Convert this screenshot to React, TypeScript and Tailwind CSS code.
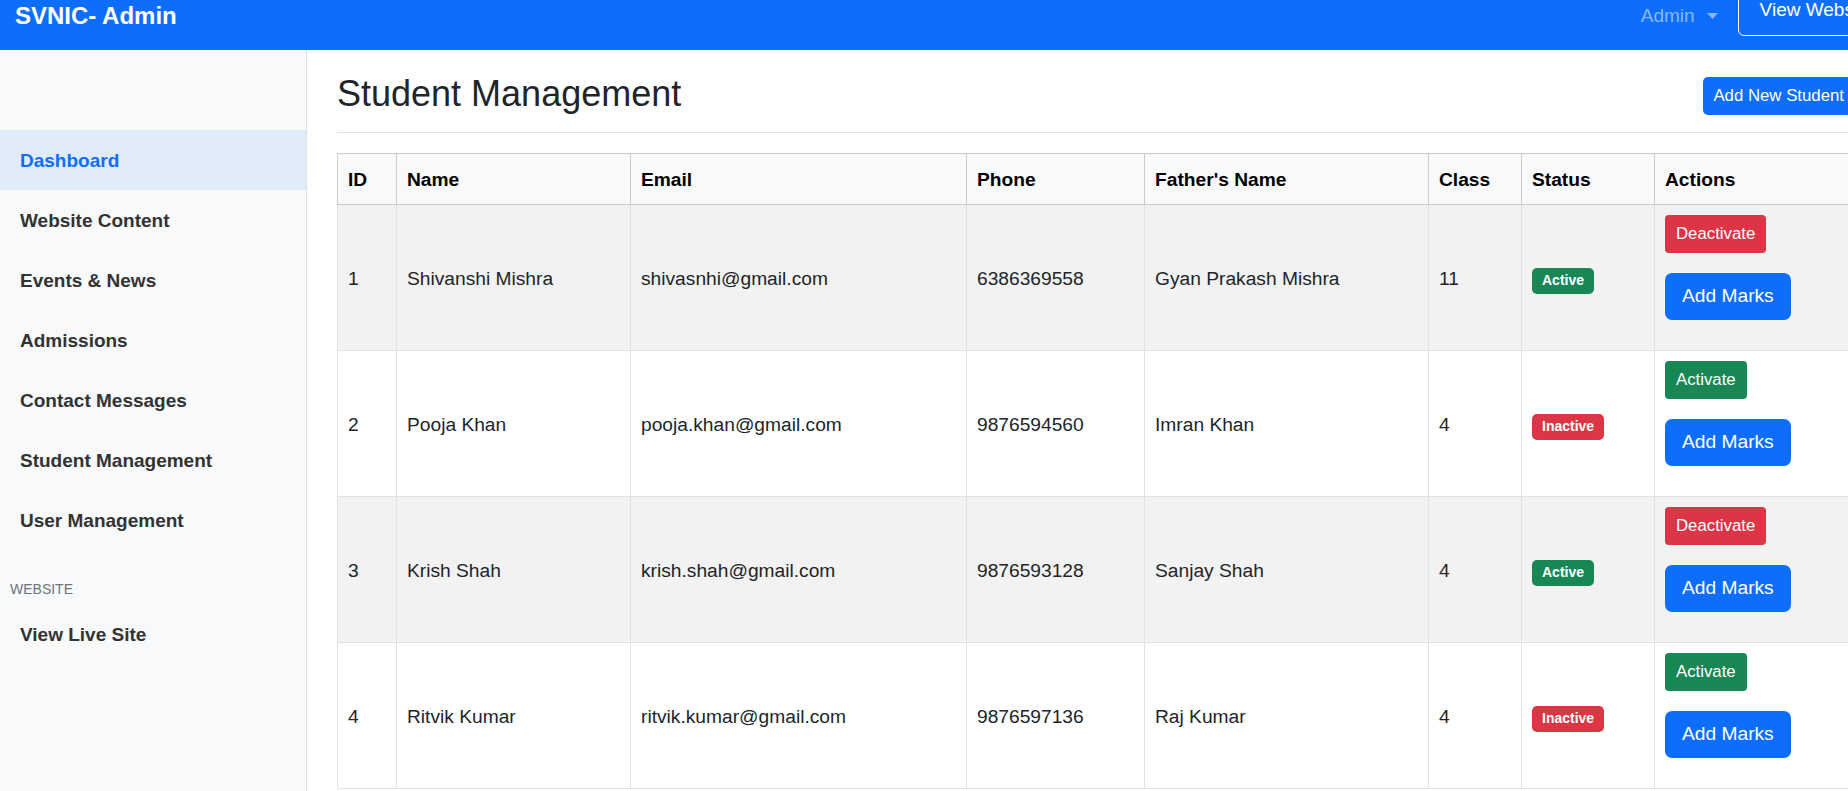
import { Fragment } from "react";

type Student = {
  id: number;
  name: string;
  email: string;
  phone: string;
  father: string;
  cls: string;
  active: boolean;
};

const students: Student[] = [
  { id: 1, name: "Shivanshi Mishra", email: "shivasnhi@gmail.com", phone: "6386369558", father: "Gyan Prakash Mishra", cls: "11", active: true },
  { id: 2, name: "Pooja Khan", email: "pooja.khan@gmail.com", phone: "9876594560", father: "Imran Khan", cls: "4", active: false },
  { id: 3, name: "Krish Shah", email: "krish.shah@gmail.com", phone: "9876593128", father: "Sanjay Shah", cls: "4", active: true },
  { id: 4, name: "Ritvik Kumar", email: "ritvik.kumar@gmail.com", phone: "9876597136", father: "Raj Kumar", cls: "4", active: false },
];

const menu = [
  "Dashboard",
  "Website Content",
  "Events & News",
  "Admissions",
  "Contact Messages",
  "Student Management",
  "User Management",
];

const headers = ["ID", "Name", "Email", "Phone", "Father's Name", "Class", "Status", "Actions"];

function Navbar() {
  return (
    <nav className="w-[1911px] h-[50px] bg-[#0d6efd] flex items-center justify-between pl-[15px] pr-[15px] pb-[18px]">
      <span className="text-white font-bold text-[24px] leading-none">SVNIC- Admin</span>
      <div className="flex items-center">
        <button className="flex items-center gap-[12px] text-[19px] text-[#8ab6fe]">
          Admin
          <svg width="11" height="6" viewBox="0 0 11 6">
            <path d="M0 0h11L5.5 6z" fill="currentColor" />
          </svg>
        </button>
        <button className="ml-[20px] self-start -mt-[19px] h-[58px] flex items-center pt-[8px] px-[21px] border border-white rounded-[6px] text-white text-[19px] whitespace-nowrap">
          View Website
        </button>
      </div>
    </nav>
  );
}

function Sidebar() {
  return (
    <aside className="w-[307px] shrink-0 h-[741px] bg-[#f8f9fa] border-r border-[#dee2e6] pt-[80px]">
      {menu.map((item, i) => (
        <a
          key={item}
          href="#"
          className={`h-[60px] flex items-center px-[20px] pt-[2px] text-[19px] font-bold ${
            i === 0 ? "bg-[#e0ebfa] text-[#0d6efd]" : "text-[#333]"
          }`}
        >
          {item}
        </a>
      ))}
      <div className="mt-[29px] h-[20px] flex items-center px-[10px] text-[14px] text-[#6c757d] uppercase">
        Website
      </div>
      <a href="#" className="mt-[6px] h-[60px] flex items-center px-[20px] text-[19px] font-bold text-[#333]">
        View Live Site
      </a>
    </aside>
  );
}

function StudentRow({ s, striped }: { s: Student; striped: boolean }) {
  const cell = "border border-[#dee2e6] px-[10px] pt-[4px] align-middle";
  return (
    <tr className={striped ? "bg-[#f2f2f2]" : "bg-white"}>
      <td className={cell}>{s.id}</td>
      <td className={cell}>{s.name}</td>
      <td className={cell}>{s.email}</td>
      <td className={cell}>{s.phone}</td>
      <td className={cell}>{s.father}</td>
      <td className={cell}>{s.cls}</td>
      <td className={cell}>
        {s.active ? (
          <span className="inline-flex items-center h-[26px] px-[10px] rounded-[5px] bg-[#198754] text-white text-[14px] font-bold">
            Active
          </span>
        ) : (
          <span className="inline-flex items-center h-[26px] px-[10px] rounded-[5px] bg-[#dc3545] text-white text-[14px] font-bold">
            Inactive
          </span>
        )}
      </td>
      <td className="border border-[#dee2e6] px-[10px] align-top pt-[10px] pb-[30px]">
        <div className="flex flex-col items-start gap-[20px]">
          {s.active ? (
            <button className="h-[38px] px-[11px] rounded-[4px] bg-[#dc3545] text-white text-[16.8px]">
              Deactivate
            </button>
          ) : (
            <button className="h-[38px] px-[11px] rounded-[4px] bg-[#198754] text-white text-[16.8px]">
              Activate
            </button>
          )}
          <button className="h-[47px] px-[17px] rounded-[7px] bg-[#0d6efd] text-white text-[19.2px]">
            Add Marks
          </button>
        </div>
      </td>
    </tr>
  );
}

export default function App() {
  return (
    <div className="w-full h-[791px] overflow-hidden bg-white text-[#212529] font-['Liberation_Sans',Arial,sans-serif]">
      <div className="w-[1884px]">
        <Navbar />
        <div className="flex">
          <Sidebar />
          <main className="flex-1 px-[30px]">
            <div className="flex items-start justify-between pt-[22px] pb-[17px] border-b border-[#dee2e6]">
              <h2 className="text-[36px] leading-[43px] text-[#212529]">Student Management</h2>
              <button className="mt-[5px] h-[38px] px-[10px] rounded-[5px] bg-[#0d6efd] text-white text-[16.8px] whitespace-nowrap">
                Add New Student
              </button>
            </div>
            <table className="mt-[20px] border-collapse table-fixed w-[1517px] text-[19.2px]">
              <colgroup>
                <col className="w-[59px]" />
                <col className="w-[234px]" />
                <col className="w-[336px]" />
                <col className="w-[178px]" />
                <col className="w-[284px]" />
                <col className="w-[93px]" />
                <col className="w-[133px]" />
                <col />
              </colgroup>
              <thead>
                <tr className="h-[51px] bg-[#f8f9fa]">
                  {headers.map((h) => (
                    <th key={h} className="border border-[#c9cbcd] px-[10px] pt-[3px] text-left font-bold text-black">
                      {h}
                    </th>
                  ))}
                </tr>
              </thead>
              <tbody>
                {students.map((s, i) => (
                  <Fragment key={s.id}>
                    <StudentRow s={s} striped={i % 2 === 0} />
                  </Fragment>
                ))}
              </tbody>
            </table>
          </main>
        </div>
      </div>
    </div>
  );
}
